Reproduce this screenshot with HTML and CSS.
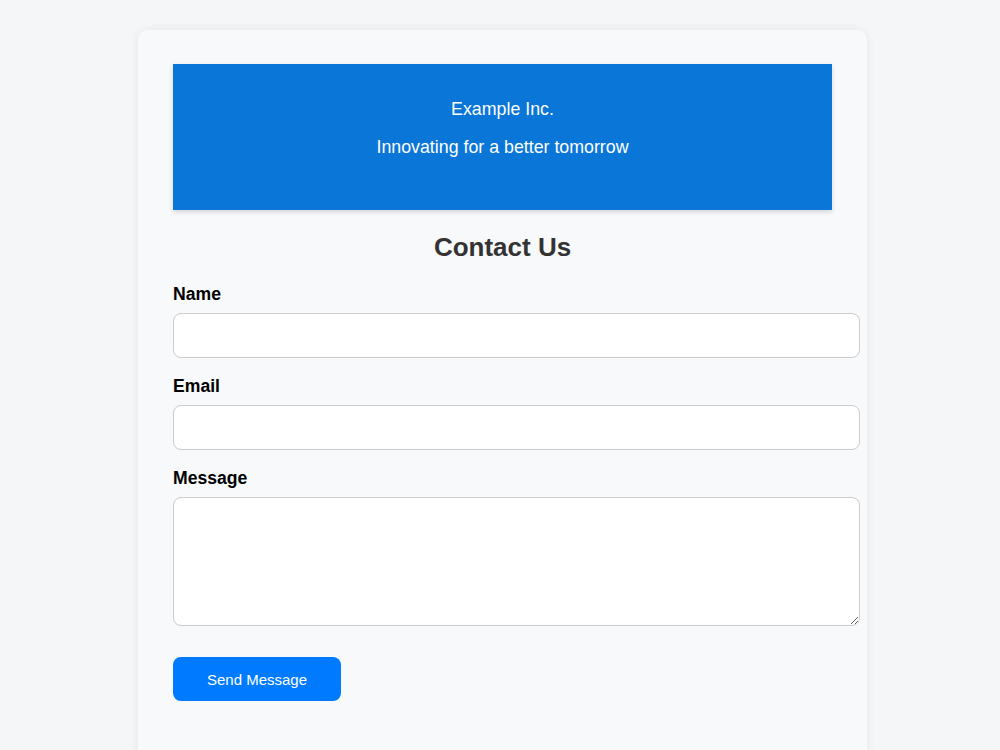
FILE: index.html
```html
<!DOCTYPE html>
<html lang="en">
<head>
<meta charset="utf-8">
<title>Contact Us - Example Inc.</title>
<link rel="stylesheet" href="styles.css">
</head>
<body>
<div class="card">
  <header class="banner">
    <p class="brand">Example Inc.</p>
    <p class="tagline">Innovating for a better tomorrow</p>
  </header>
  <h2 class="title">Contact Us</h2>
  <form class="form">
    <label class="label" for="name">Name</label>
    <input class="field" type="text" id="name">
    <label class="label" for="email">Email</label>
    <input class="field" type="email" id="email">
    <label class="label" for="message">Message</label>
    <textarea class="field area" id="message"></textarea>
    <button class="btn" type="button">Send Message</button>
  </form>
</div>
</body>
</html>
```
FILE: styles.css
```css
html, body {
  margin: 0;
  padding: 0;
  background: #f5f6f8;
  font-family: "Liberation Sans", Arial, sans-serif;
}
body {
  padding-top: 30px;
}
.card {
  width: 659px;
  margin-left: 138px;
  padding: 34px 35px 40px;
  background: #f8f9fa;
  border-radius: 10px;
  box-shadow: 0 0 10px rgba(0, 0, 0, 0.07);
  min-height: 660px;
}
.banner {
  background: #0a76d8;
  color: #fff;
  text-align: center;
  padding: 35px 20px 52px;
  box-shadow: 0 2px 5px rgba(0, 0, 0, 0.15);
}
.brand, .tagline {
  margin: 0;
  font-size: 17.8px;
  line-height: 21px;
}
.tagline {
  margin-top: 17px;
}
.title {
  margin: 21px 0 21px;
  text-align: center;
  font-size: 26px;
  line-height: 32px;
  color: #333;
  font-weight: bold;
}
.form {
  display: block;
}
.label {
  display: block;
  font-size: 17.6px;
  line-height: 20px;
  font-weight: bold;
  color: #000;
  margin-bottom: 9px;
}
.field {
  display: block;
  width: 659px;
  height: 19px;
  padding: 12px 13px;
  margin: 0 0 18px;
  border: 1px solid #ccc;
  border-radius: 8px;
  background: #fff;
  font-family: inherit;
  font-size: 16px;
  box-sizing: content-box;
}
.area {
  height: 103px;
  margin-bottom: 31px;
  resize: vertical;
}
.btn {
  display: block;
  width: 168px;
  height: 44px;
  padding: 0;
  border: none;
  border-radius: 8px;
  background: #007bff;
  color: #fff;
  font-family: "Liberation Sans", Arial, sans-serif;
  font-size: 15px;
}
```
